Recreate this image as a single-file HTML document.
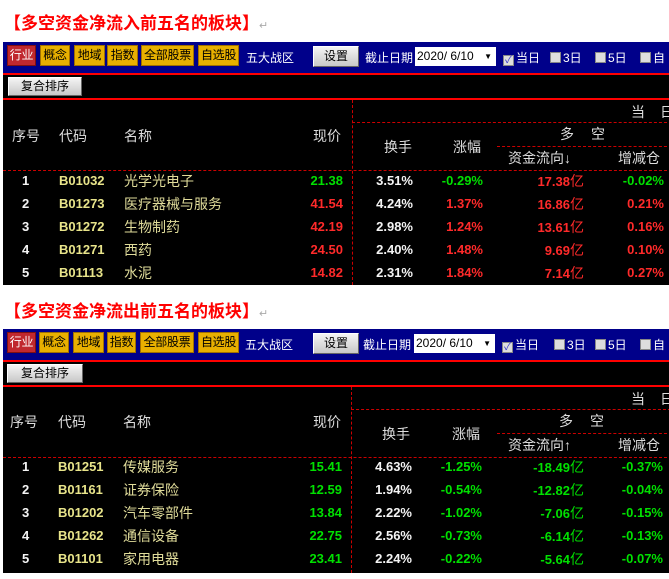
<!DOCTYPE html>
<html><head><meta charset="utf-8"><style>
*{margin:0;padding:0;box-sizing:border-box}
body{width:669px;height:579px;background:#fff;position:relative;overflow:hidden;font-family:"Liberation Sans","Noto Sans CJK SC",sans-serif}
.a{position:absolute;white-space:nowrap}
.title{font-size:17px;font-weight:bold;color:#f00;left:4px}
.ret{color:#aaa;font-size:11px;font-weight:normal}
.panel{position:absolute;left:3px;width:666px;background:#000;overflow:hidden}
.tb{position:absolute;left:0;top:0;width:100%;height:31px;background:#00008a}
.rl{position:absolute;left:0;width:100%;height:2px;background:#f00}
.btn{position:absolute;top:3px;height:21px;font-size:12px;line-height:19px;text-align:center;background:#e8b000;color:#000;border:1px solid #a07000;overflow:hidden;letter-spacing:-0.3px}
.gb{position:absolute;height:19px;background:linear-gradient(#f4f4f4,#c8c8c8);border:1px solid #fff;border-right-color:#666;border-bottom-color:#666;font-size:12px;line-height:17px;text-align:center;color:#000}
.w{color:#fff;font-size:12px;line-height:16px}
.cb{display:inline-block;width:11px;height:11px;background:#ddd;border:1px solid #888;vertical-align:-1px;margin-right:2px;font-size:10px;line-height:9px;color:#33c;text-align:center}
.h{color:#ddd;font-size:14px;line-height:16px}
.vd{position:absolute;width:0;border-left:1px dashed #c00}
.hd{position:absolute;height:0;border-top:1px dashed #c00}
.r{font-size:13px;font-weight:bold;line-height:16px}
.r span{line-height:16px}
.r i{font-style:normal;font-weight:normal;font-size:14px;line-height:16px}
.y{color:#e8e48a}.g{color:#00e000}.rd{color:#ff2a2a}.wh{color:#f4f4f4}
.nm{color:#e0dc9a;font-weight:normal;font-size:14px}
</style></head><body>

<div class="a title" style="top:9px">【多空资金净流入前五名的板块】<span class="ret">↵</span></div>
<div class="a title" style="top:297px">【多空资金净流出前五名的板块】<span class="ret">↵</span></div>

<!-- PANEL 1 -->
<div class="panel" style="top:42px;height:243px">
 <div class="tb">
  <div class="btn" style="left:4px;width:29px;background:#c0282e;color:#fff;border-color:#801010">行业</div>
  <div class="btn" style="left:37px;width:30px">概念</div>
  <div class="btn" style="left:71px;width:31px">地域</div>
  <div class="btn" style="left:104px;width:31px">指数</div>
  <div class="btn" style="left:138px;width:53px">全部股票</div>
  <div class="btn" style="left:195px;width:41px">自选股</div>
  <div class="a w" style="left:243px;top:8px">五大战区</div>
  <div class="gb" style="left:310px;top:4px;width:46px;height:21px;line-height:19px;font-size:12px">设置</div>
  <div class="a w" style="left:362px;top:8px">截止日期</div>
  <div class="a" style="left:412px;top:5px;width:81px;height:19px;background:#fff;font-size:12px;line-height:19px;padding-left:2px;color:#000">2020/ 6/10 <span style="position:absolute;right:4px;font-size:8px">▼</span></div>
  <div class="a w" style="left:500px;top:8px"><span class="cb">✓</span>当日</div>
  <div class="a w" style="left:547px;top:8px"><span class="cb"></span>3日</div>
  <div class="a w" style="left:592px;top:8px"><span class="cb"></span>5日</div>
  <div class="a w" style="left:637px;top:8px"><span class="cb"></span>自</div>
 </div>
 <div class="rl" style="top:31px"></div>
 <div class="gb" style="left:5px;top:35px;width:74px">复合排序</div>
 <div class="rl" style="top:56px"></div>
 <div class="a h" style="left:9px;top:86px">序号</div>
 <div class="a h" style="left:56px;top:86px">代码</div>
 <div class="a h" style="left:121px;top:86px">名称</div>
 <div class="a h" style="left:310px;top:86px">现价</div>
 <div class="vd" style="left:349px;top:58px;height:185px"></div>
 <div class="a h" style="left:628px;top:62px">当</div>
 <div class="a h" style="left:657px;top:62px">日</div>
 <div class="hd" style="left:349px;top:80px;width:320px"></div>
 <div class="a h" style="left:381px;top:97px">换手</div>
 <div class="a h" style="left:450px;top:97px">涨幅</div>
 <div class="a h" style="left:557px;top:84px">多</div>
 <div class="a h" style="left:588px;top:84px">空</div>
 <div class="hd" style="left:494px;top:104px;width:175px"></div>
 <div class="a h" style="left:505px;top:108px">资金流向↓</div>
 <div class="a h" style="left:615px;top:108px">增减仓</div>
 <div class="hd" style="left:0;top:128px;width:669px"></div>
 <div style="position:absolute;left:0;top:131px;width:100%">
  <div class="a r" style="top:0;left:0;width:100%;height:23px">
   <span class="a wh" style="left:19px">1</span><span class="a y" style="left:56px">B01032</span><span class="a nm" style="left:121px">光学光电子</span>
   <span class="a g" style="right:326px">21.38</span><span class="a wh" style="right:256px">3.51%</span><span class="a g" style="right:186px">-0.29%</span><span class="a rd" style="right:85px">17.38<i>亿</i></span><span class="a g" style="right:5px">-0.02%</span>
  </div>
  <div class="a r" style="top:23px;left:0;width:100%;height:23px">
   <span class="a wh" style="left:19px">2</span><span class="a y" style="left:56px">B01273</span><span class="a nm" style="left:121px">医疗器械与服务</span>
   <span class="a rd" style="right:326px">41.54</span><span class="a wh" style="right:256px">4.24%</span><span class="a rd" style="right:186px">1.37%</span><span class="a rd" style="right:85px">16.86<i>亿</i></span><span class="a rd" style="right:5px">0.21%</span>
  </div>
  <div class="a r" style="top:46px;left:0;width:100%;height:23px">
   <span class="a wh" style="left:19px">3</span><span class="a y" style="left:56px">B01272</span><span class="a nm" style="left:121px">生物制药</span>
   <span class="a rd" style="right:326px">42.19</span><span class="a wh" style="right:256px">2.98%</span><span class="a rd" style="right:186px">1.24%</span><span class="a rd" style="right:85px">13.61<i>亿</i></span><span class="a rd" style="right:5px">0.16%</span>
  </div>
  <div class="a r" style="top:69px;left:0;width:100%;height:23px">
   <span class="a wh" style="left:19px">4</span><span class="a y" style="left:56px">B01271</span><span class="a nm" style="left:121px">西药</span>
   <span class="a rd" style="right:326px">24.50</span><span class="a wh" style="right:256px">2.40%</span><span class="a rd" style="right:186px">1.48%</span><span class="a rd" style="right:85px">9.69<i>亿</i></span><span class="a rd" style="right:5px">0.10%</span>
  </div>
  <div class="a r" style="top:92px;left:0;width:100%;height:23px">
   <span class="a wh" style="left:19px">5</span><span class="a y" style="left:56px">B01113</span><span class="a nm" style="left:121px">水泥</span>
   <span class="a rd" style="right:326px">14.82</span><span class="a wh" style="right:256px">2.31%</span><span class="a rd" style="right:186px">1.84%</span><span class="a rd" style="right:85px">7.14<i>亿</i></span><span class="a rd" style="right:5px">0.27%</span>
  </div>
 </div>
</div>

<!-- PANEL 2 -->
<div class="panel" style="top:329px;height:244px">
 <div class="tb">
  <div class="btn" style="left:4px;width:29px;background:#c0282e;color:#fff;border-color:#801010">行业</div>
  <div class="btn" style="left:36px;width:30px">概念</div>
  <div class="btn" style="left:70px;width:31px">地域</div>
  <div class="btn" style="left:104px;width:29px">指数</div>
  <div class="btn" style="left:137px;width:54px">全部股票</div>
  <div class="btn" style="left:195px;width:41px">自选股</div>
  <div class="a w" style="left:242px;top:8px">五大战区</div>
  <div class="gb" style="left:310px;top:4px;width:46px;height:21px;line-height:19px;font-size:12px">设置</div>
  <div class="a w" style="left:360px;top:8px">截止日期</div>
  <div class="a" style="left:411px;top:5px;width:81px;height:19px;background:#fff;font-size:12px;line-height:19px;padding-left:2px;color:#000">2020/ 6/10 <span style="position:absolute;right:4px;font-size:8px">▼</span></div>
  <div class="a w" style="left:499px;top:8px"><span class="cb">✓</span>当日</div>
  <div class="a w" style="left:551px;top:8px"><span class="cb"></span>3日</div>
  <div class="a w" style="left:592px;top:8px"><span class="cb"></span>5日</div>
  <div class="a w" style="left:637px;top:8px"><span class="cb"></span>自</div>
 </div>
 <div class="rl" style="top:31px"></div>
 <div class="gb" style="left:4px;top:35px;width:76px">复合排序</div>
 <div class="rl" style="top:56px"></div>
 <div class="a h" style="left:7px;top:85px">序号</div>
 <div class="a h" style="left:55px;top:85px">代码</div>
 <div class="a h" style="left:120px;top:85px">名称</div>
 <div class="a h" style="left:310px;top:85px">现价</div>
 <div class="vd" style="left:348px;top:58px;height:186px"></div>
 <div class="a h" style="left:628px;top:62px">当</div>
 <div class="a h" style="left:657px;top:62px">日</div>
 <div class="hd" style="left:348px;top:80px;width:320px"></div>
 <div class="a h" style="left:379px;top:97px">换手</div>
 <div class="a h" style="left:449px;top:97px">涨幅</div>
 <div class="a h" style="left:556px;top:84px">多</div>
 <div class="a h" style="left:587px;top:84px">空</div>
 <div class="hd" style="left:494px;top:104px;width:175px"></div>
 <div class="a h" style="left:505px;top:108px">资金流向↑</div>
 <div class="a h" style="left:615px;top:108px">增减仓</div>
 <div class="hd" style="left:0;top:128px;width:669px"></div>
 <div style="position:absolute;left:0;top:130px;width:100%">
  <div class="a r" style="top:0;left:0;width:100%;height:23px">
   <span class="a wh" style="left:19px">1</span><span class="a y" style="left:55px">B01251</span><span class="a nm" style="left:120px">传媒服务</span>
   <span class="a g" style="right:327px">15.41</span><span class="a wh" style="right:257px">4.63%</span><span class="a g" style="right:187px">-1.25%</span><span class="a g" style="right:85px">-18.49<i>亿</i></span><span class="a g" style="right:6px">-0.37%</span>
  </div>
  <div class="a r" style="top:23px;left:0;width:100%;height:23px">
   <span class="a wh" style="left:19px">2</span><span class="a y" style="left:55px">B01161</span><span class="a nm" style="left:120px">证券保险</span>
   <span class="a g" style="right:327px">12.59</span><span class="a wh" style="right:257px">1.94%</span><span class="a g" style="right:187px">-0.54%</span><span class="a g" style="right:85px">-12.82<i>亿</i></span><span class="a g" style="right:6px">-0.04%</span>
  </div>
  <div class="a r" style="top:46px;left:0;width:100%;height:23px">
   <span class="a wh" style="left:19px">3</span><span class="a y" style="left:55px">B01202</span><span class="a nm" style="left:120px">汽车零部件</span>
   <span class="a g" style="right:327px">13.84</span><span class="a wh" style="right:257px">2.22%</span><span class="a g" style="right:187px">-1.02%</span><span class="a g" style="right:85px">-7.06<i>亿</i></span><span class="a g" style="right:6px">-0.15%</span>
  </div>
  <div class="a r" style="top:69px;left:0;width:100%;height:23px">
   <span class="a wh" style="left:19px">4</span><span class="a y" style="left:55px">B01262</span><span class="a nm" style="left:120px">通信设备</span>
   <span class="a g" style="right:327px">22.75</span><span class="a wh" style="right:257px">2.56%</span><span class="a g" style="right:187px">-0.73%</span><span class="a g" style="right:85px">-6.14<i>亿</i></span><span class="a g" style="right:6px">-0.13%</span>
  </div>
  <div class="a r" style="top:92px;left:0;width:100%;height:23px">
   <span class="a wh" style="left:19px">5</span><span class="a y" style="left:55px">B01101</span><span class="a nm" style="left:120px">家用电器</span>
   <span class="a g" style="right:327px">23.41</span><span class="a wh" style="right:257px">2.24%</span><span class="a g" style="right:187px">-0.22%</span><span class="a g" style="right:85px">-5.64<i>亿</i></span><span class="a g" style="right:6px">-0.07%</span>
  </div>
 </div>
</div>
</body></html>
